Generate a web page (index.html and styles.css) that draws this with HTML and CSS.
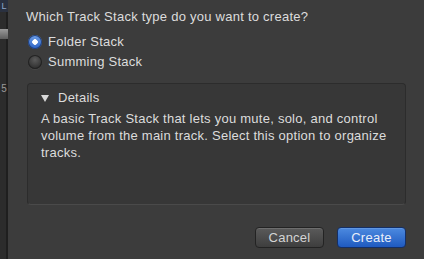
FILE: index.html
```html
<!DOCTYPE html>
<html lang="en">
<head>
  <meta charset="UTF-8" />
  <title>New Track Stack</title>
  <link rel="stylesheet" href="styles.css">
</head>
<body>
  <div class="backdrop">
    <span class="mark-l">L</span>
    <span class="band"></span>
    <span class="mark-5">5</span>
  </div>
  <div class="sheet">
    <p class="question">Which Track Stack type do you want to create?</p>
    <div class="options">
      <label class="option"><span class="radio checked"></span>Folder Stack</label>
      <label class="option"><span class="radio"></span>Summing Stack</label>
    </div>
    <div class="details">
      <div class="details-head"><span class="arrow"></span>Details</div>
      <p class="details-text">A basic Track Stack that lets you mute, solo, and control volume from the main track. Select this option to organize tracks.</p>
    </div>
    <div class="actions">
      <button class="btn">Cancel</button>
      <button class="btn primary">Create</button>
    </div>
  </div>
</body>
</html>
```

FILE: styles.css
```css
* { box-sizing: border-box; margin: 0; padding: 0; }

body {
  display: flex;
  width: 424px;
  height: 259px;
  overflow: hidden;
  background: #2b2b2b;
  font-family: "Liberation Sans", Arial, sans-serif;
  font-size: 13px;
  letter-spacing: 0.25px;
  color: #dcdcdc;
}

.backdrop {
  width: 8px;
  flex: none;
  display: flex;
  flex-direction: column;
  align-items: center;
  letter-spacing: 0;
  background: linear-gradient(to right, #2c2c2c 0, #2c2c2c 6px, #1f1f1f 6px, #1f1f1f 8px);
}

.mark-l {
  height: 12px;
  width: 8px;
  font-size: 9px;
  line-height: 12px;
  text-align: center;
  color: #8fa8cc;
  background: #2a3140;
}

.band {
  width: 8px;
  height: 10px;
  margin-top: 17px;
  background: linear-gradient(to bottom, #9a9a9a, #5e5e5e);
}

.mark-5 {
  margin-top: 44px;
  font-size: 10px;
  line-height: 12px;
  color: #9a9a9a;
}

.sheet {
  flex: 1;
  display: flex;
  flex-direction: column;
  background: #3c3c3c;
  padding: 9px 18px 0 18px;
}

.question {
  line-height: 16px;
}

.options {
  display: flex;
  flex-direction: column;
  gap: 4px;
  margin: 9px 0 0 2px;
}

.option {
  display: flex;
  align-items: center;
  gap: 6px;
  line-height: 16px;
}

.radio {
  width: 14px;
  height: 14px;
  border-radius: 50%;
  background: radial-gradient(circle at 50% 35%, #5a5a5a, #2e2e2e 75%);
  box-shadow: inset 0 0 0 1px #222, 0 1px 0 rgba(255,255,255,0.06);
}

.radio.checked {
  background: radial-gradient(circle, #fff 0, #fff 2.5px, transparent 3px),
    linear-gradient(to bottom, #6f9fe6, #2c62c4);
  box-shadow: inset 0 0 0 1px #1d3f80;
}

.details {
  height: 122px;
  margin-top: 13px;
  margin-left: 1px;
  padding: 6px 10px 0 13px;
  background: #373737;
  border: 1px solid #2c2c2c;
  border-bottom-color: #4a4a4a;
  border-radius: 4px;
}

.details-head {
  display: flex;
  align-items: center;
  line-height: 16px;
}

.arrow {
  width: 0;
  height: 0;
  border-left: 4px solid transparent;
  border-right: 4px solid transparent;
  border-top: 7px solid #d8d8d8;
  margin-right: 9px;
}

.details-text {
  margin-top: 4px;
  line-height: 17px;
}

.actions {
  display: flex;
  justify-content: flex-end;
  gap: 13px;
  margin-top: 22px;
}

.btn {
  width: 69px;
  height: 21px;
  font-family: inherit;
  font-size: 13px;
  letter-spacing: 0.25px;
  color: #d4d4d4;
  background: linear-gradient(to bottom, #5a5a5a, #3e3e3e);
  border: 1px solid #232323;
  border-radius: 4px;
  box-shadow: inset 0 1px 0 rgba(255,255,255,0.12);
}

.btn.primary {
  color: #e8eefa;
  background: linear-gradient(to bottom, #4c8ae0, #1f5ac0);
  border-color: #142f66;
}
```
